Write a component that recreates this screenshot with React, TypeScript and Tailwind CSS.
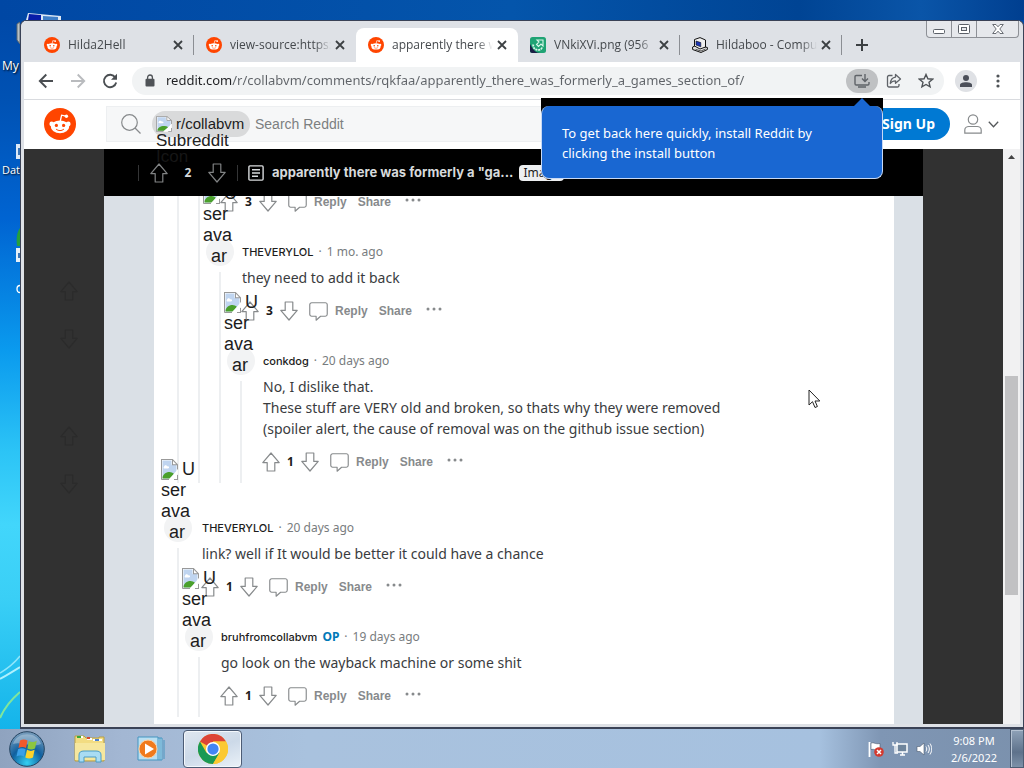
import React from "react";

type IconProps = { className?: string };

const Snoo = ({ className }: IconProps) => (
  <svg viewBox="0 0 32 32" className={className} aria-hidden="true">
    <circle cx="16" cy="16" r="16" fill="#ff4500" />
    <path d="M16.3 13 17.6 7.2 22 8.2" fill="none" stroke="#fff" strokeWidth="1.3" />
    <circle cx="22.4" cy="8.2" r="1.7" fill="#fff" />
    <circle cx="7.7" cy="15.9" r="2.3" fill="#fff" />
    <circle cx="24.3" cy="15.9" r="2.3" fill="#fff" />
    <ellipse cx="16" cy="18.8" rx="9.2" ry="6.4" fill="#fff" />
    <circle cx="12.4" cy="17.4" r="1.6" fill="#ff4500" />
    <circle cx="19.6" cy="17.4" r="1.6" fill="#ff4500" />
    <path d="M12.4 21.4c2 1.7 5.2 1.7 7.2 0" fill="none" stroke="#ff4500" strokeWidth="1" strokeLinecap="round" />
  </svg>
);

const ImageFavicon = ({ className }: IconProps) => (
  <svg viewBox="0 0 16 16" className={className} aria-hidden="true">
    <rect width="16" height="16" rx="2.5" fill="#1fa374" />
    <path d="M0 7v6.500A2.500 2.500 0 0 0 2.500 16H10c-4 0-7-3-10-9z" fill="#1b1f45" />
    <path d="M7 3h6v6l-2-2-2.500 2.500L6.500 7.500 9 5z" fill="#1fa374" stroke="#d9f7ea" strokeWidth="1.100" />
    <path d="M3.300 7.500C2.800 10.500 5 13 8 13c2.300 0 3.800-1.200 4.200-2.800" fill="none" stroke="#d9f7ea" strokeWidth="1.800" strokeDasharray="2 .8" />
  </svg>
);

const ComputerFavicon = ({ className }: IconProps) => (
  <svg viewBox="0 0 16 16" className={className} aria-hidden="true">
    <path d="M.6 10 5 8l10.400 2.500v2L9 15.500l-8.400-3z" fill="#e2e2e2" stroke="#111" />
    <path d="M2.500 2.500 8 .6l5.500 2.400v7L8 12 2.500 9z" fill="#efefef" stroke="#111" />
    <path d="M4 4l4.800 1.600v4.200L4 8z" fill="#1c35b5" stroke="#111" strokeWidth=".6" />
    <path d="M3.500 12.300 9 14l4.500-2" fill="none" stroke="#555" />
  </svg>
);

const BrokenImage = ({ className }: IconProps) => (
  <svg viewBox="0 0 17 20" className={className} preserveAspectRatio="none" aria-hidden="true">
    <path d="M.5.5h11l5 5v14H.5z" fill="#fff" />
    <path d="M1.500 1.500h9v4h5v8L8 18.500H1.500z" fill="#c0d5f0" />
    <path d="M3 7.500c0-2 3-2 3-.5 2-.5 3 1.500 1 2H4C2.600 9 2 8 3 7.500z" fill="#fff" />
    <path d="M1.500 18.500c0-4 4-6.500 8-6 2 .2 3 1 3.500 1.800L8.500 18.500z" fill="#4aa02c" />
    <path d="M.5 19.500V.5h11l5 5v4.500M11.500.5v5h5M.5 19.500H8M16.500 15v4.500H13" fill="none" stroke="#999" />
    <path d="M16.500 10 8 19.500h4l4.500-5z" fill="#fff" />
  </svg>
);

const Vote = ({ down = false, className }: IconProps & { down?: boolean }) => (
  <svg viewBox="0 0 18 20" className={className} aria-hidden="true" fill="none" stroke="currentColor" strokeWidth="1.200" strokeLinejoin="round">
    {down ? (
      <path d="M5.200 1h7.600v8.400h4.400L9 19 .8 9.400h4.400z" />
    ) : (
      <path d="M5.200 19h7.600v-8.400h4.400L9 1 .8 10.600h4.400z" />
    )}
  </svg>
);

const Bubble = ({ className }: IconProps) => (
  <svg viewBox="0 0 20 20" className={className} aria-hidden="true" fill="none" stroke="currentColor" strokeWidth="1.200" strokeLinejoin="round">
    <path d="M2.800.8h14.400a2 2 0 0 1 2 2V13a2 2 0 0 1-2 2h-5L7.500 19.200V15H2.800a2 2 0 0 1-2-2V2.800a2 2 0 0 1 2-2z" />
  </svg>
);

const Close = () => (
  <svg viewBox="0 0 10 10" className="size-[10px]" aria-hidden="true">
    <path d="M1 1l8 8M9 1 1 9" stroke="#3c4043" strokeWidth="1.800" />
  </svg>
);

const tabs = [
  { title: "Hilda2Hell", icon: <Snoo className="size-4" />, rule: true },
  { title: "view-source:https:", icon: <Snoo className="size-4" /> },
  { title: "apparently there w", icon: <Snoo className="size-4" />, active: true },
  { title: "VNkiXVi.png (956", icon: <ImageFavicon className="size-4" />, rule: true },
  { title: "Hildaboo - Compu", icon: <ComputerFavicon className="size-4" />, rule: true },
];

function TabStrip() {
  return (
    <div className="flex h-[41px] items-end bg-[#dee1e6] pl-2">
      {tabs.map((t) => (
        <div
          key={t.title}
          className={
            "flex h-[34px] w-[162px] shrink-0 items-center pl-3 " +
            (t.active ? "rounded-t-lg bg-white" : "")
          }
        >
          {t.icon}
          <button className="ml-2 w-[101px] overflow-hidden text-left font-[Open_Sans,sans-serif] text-xs whitespace-nowrap text-[#45494d] [mask-image:linear-gradient(90deg,#000_84%,transparent_100%)]">
            {t.title}
          </button>
          <button aria-label={"Close " + t.title} className="ml-px flex size-4 items-center justify-center">
            <Close />
          </button>
          {t.rule && <span className="ml-auto h-5 w-px bg-[#8b8e93]" />}
        </div>
      ))}
      <button aria-label="New tab" className="ml-[14px] flex h-[34px] items-center">
        <svg viewBox="0 0 12 12" className="size-3" aria-hidden="true">
          <path d="M6 0v12M0 6h12" stroke="#3c4043" strokeWidth="2" />
        </svg>
      </button>
      <div className="ml-auto mr-px flex h-[17px] self-start rounded-b border border-t-0 border-[#8d9096] bg-[#e6e8ec]">
        <button aria-label="Minimize" className="flex w-[25px] items-center justify-center border-r border-[#8d9096] pt-1">
          <svg viewBox="0 0 12 5" className="h-[5px] w-3" aria-hidden="true"><rect x=".5" y=".5" width="11" height="4" rx="1" fill="#fff" stroke="#5b6068" /></svg>
        </button>
        <button aria-label="Maximize" className="flex w-[25px] items-center justify-center border-r border-[#8d9096]">
          <svg viewBox="0 0 12 10" className="h-[10px] w-3" aria-hidden="true"><rect x=".5" y=".5" width="11" height="9" rx="1" fill="#fff" stroke="#5b6068" /><rect x="3.500" y="3.500" width="5" height="3" fill="#e6e8ec" stroke="#5b6068" /></svg>
        </button>
        <button aria-label="Close window" className="flex w-[41px] items-center justify-center">
          <svg viewBox="0 0 12 10" className="h-[10px] w-3" aria-hidden="true"><path d="M.7.500h3.300l2 2.300 2-2.300h3.300L7.800 5l3.500 4.500H8L6 7.200 4 9.500H.7L4.200 5z" fill="#fff" stroke="#5b6068" strokeWidth=".9" /></svg>
        </button>
      </div>
    </div>
  );
}

function Toolbar() {
  return (
    <div className="flex h-[38px] items-center border-b border-[#d9dbdf] bg-white pr-5 pl-[14px]">
      <div className="flex gap-4 text-[#4a4e52]">
        <button aria-label="Back" className="size-4">
          <svg viewBox="0 0 16 16" aria-hidden="true"><path d="M15 8H2M8.300 1.500 1.800 8l6.500 6.500" fill="none" stroke="currentColor" strokeWidth="1.900" /></svg>
        </button>
        <button aria-label="Forward" className="size-4 text-[#b9bbbe]">
          <svg viewBox="0 0 16 16" aria-hidden="true"><path d="M1 8h13M7.700 1.500 14.200 8l-6.500 6.500" fill="none" stroke="currentColor" strokeWidth="1.900" /></svg>
        </button>
        <button aria-label="Reload" className="size-4">
          <svg viewBox="0 0 16 16" aria-hidden="true"><path d="M13.300 4.500A6.200 6.200 0 1 0 14.200 9.500" fill="none" stroke="currentColor" strokeWidth="1.900" /><path d="M15 .8v6H9z" fill="currentColor" /></svg>
        </button>
      </div>
      <div className="ml-[14px] flex h-7 flex-1 items-center rounded-full bg-[#f1f3f4] pr-[10px] pl-[13px]">
        <svg viewBox="0 0 10 13" className="h-[13px] w-[10px]" aria-hidden="true"><rect x=".5" y="4.800" width="9" height="7.700" rx="1" fill="#4f5357" /><path d="M2.600 5V3.400a2.400 2.400 0 0 1 4.800 0V5" fill="none" stroke="#4f5357" strokeWidth="1.300" /></svg>
        <label htmlFor="url" className="sr-only">Address</label>
        <input
          id="url"
          className="ml-[11px] min-w-0 flex-1 bg-[linear-gradient(90deg,#202124_66px,#5f6368_66px)] bg-clip-text font-['Noto_Sans',sans-serif] text-[13px] text-transparent outline-none"
          defaultValue="reddit.com/r/collabvm/comments/rqkfaa/apparently_there_was_formerly_a_games_section_of/"
        />
        <button aria-label="Install Reddit" className="flex h-6 w-8 items-center justify-center rounded-full bg-[#bfc1c3]">
          <svg viewBox="0 0 16 14" className="h-[14px] w-4" aria-hidden="true" fill="none" stroke="#5f6368" strokeWidth="1.400"><path d="M8 1.500H2.200A1.200 1.200 0 0 0 1 2.700v7.100A1.200 1.200 0 0 0 2.200 11h11.600A1.200 1.200 0 0 0 15 9.800V8M4 13h8M11 0v7M8 4.500l3 3 3-3" /></svg>
        </button>
        <button aria-label="Share page" className="ml-2 size-4">
          <svg viewBox="0 0 16 16" aria-hidden="true" fill="none" stroke="#5f6368" strokeWidth="1.300" strokeLinejoin="round"><path d="M6.500 2.500H3A1.500 1.500 0 0 0 1.500 4v8.500A1.500 1.500 0 0 0 3 14h8.500a1.500 1.500 0 0 0 1.500-1.500V11" /><path d="M9.500 1.500 14.500 6l-5 4.300V7.800C7 7.800 5.500 8.700 4.300 10.500 4.600 7 6.500 4.500 9.500 4.100z" /></svg>
        </button>
        <button aria-label="Bookmark" className="ml-4 size-4">
          <svg viewBox="0 0 16 16" aria-hidden="true"><path d="M8 1.500l1.900 4.300 4.700.4L11 9.300l1.100 4.600L8 11.500l-4.100 2.400L5 9.300 1.400 6.200l4.700-.4z" fill="none" stroke="#4f5357" strokeWidth="1.400" /></svg>
        </button>
      </div>
      <button aria-label="Profile" className="ml-[11px] flex size-[22px] items-center justify-center rounded-full bg-[#dfe1e5]">
        <svg viewBox="0 0 12 12" className="size-3" aria-hidden="true" fill="#4b4f59"><circle cx="6" cy="3" r="3" /><path d="M0 12V9.800C0 8 3 7.200 6 7.200s6 .8 6 2.600V12z" /></svg>
      </button>
      <button aria-label="Menu" className="ml-[19px] h-[14px] w-1">
        <svg viewBox="0 0 4 14" aria-hidden="true" fill="#4f5357"><circle cx="2" cy="2" r="1.600" /><circle cx="2" cy="7" r="1.600" /><circle cx="2" cy="12" r="1.600" /></svg>
      </button>
    </div>
  );
}

function SiteHeader() {
  return (
    <header className="flex h-[49px] items-center bg-white pr-[21px] pb-px pl-5">
      <a href="#home" aria-label="Reddit home"><Snoo className="size-8" /></a>
      <div className="ml-[30px] flex h-9 flex-1 items-center border border-[#edeff1] bg-[#f6f7f8] pl-[14px]">
        <svg viewBox="0 0 20 20" className="size-5" aria-hidden="true" fill="none" stroke="#878a8c" strokeWidth="1.200"><circle cx="8.500" cy="8.500" r="7.800" /><path d="M14 14l5.500 5.500" /></svg>
        <div className="relative ml-[11px] flex h-[26px] w-[98px] items-center rounded-full bg-[#d9dadb] pl-1">
          <BrokenImage className="h-4 w-4" />
          <span className="ml-1 text-[15px] leading-4 text-[#1c1c1c]">r/collabvm</span>
          <span className="absolute top-[22px] left-1 z-10 text-[17px] leading-4 text-[#222]">
            Subreddit
            <span className="block text-[#161616]">Icon</span>
          </span>
        </div>
        <label htmlFor="search" className="sr-only">Search</label>
        <input id="search" placeholder="Search Reddit" className="ml-[5px] min-w-0 flex-1 bg-transparent text-sm outline-none placeholder:text-[#7c7f81]" />
      </div>
      <button className="ml-4 h-8 w-[120px] rounded-full bg-[#0079d3] pr-[15px] text-right font-['Noto_Sans',sans-serif] text-sm font-bold text-white">Sign Up</button>
      <button aria-label="Account" className="ml-[14px] flex items-center gap-[6px]">
        <svg viewBox="0 0 18 20" className="h-5 w-[18px]" aria-hidden="true" fill="none" stroke="#878a8c" strokeWidth="1.200"><circle cx="9" cy="5.500" r="4.700" /><path d="M.8 19.200V16c0-2 2-3.500 4-3.500h8.400c2 0 4 1.500 4 3.500v3.200z" /></svg>
        <svg viewBox="0 0 11 7" className="h-[7px] w-[11px]" aria-hidden="true" fill="none" stroke="#55585a" strokeWidth="1.300"><path d="M.8.800 5.500 5.800 10.200.800" /></svg>
      </button>
    </header>
  );
}

function PostBar() {
  return (
    <div className="flex h-[47px] items-center bg-black pl-[34px] text-[#d7dadc]">
      <span className="h-4 w-px bg-[#343536]" />
      <button aria-label="Upvote post" className="ml-[11px] text-[#818384]"><Vote className="h-5 w-[18px]" /></button>
      <span className="w-10 text-center font-['Noto_Sans',sans-serif] text-xs font-bold">2</span>
      <button aria-label="Downvote post" className="text-[#818384]"><Vote down className="h-5 w-[18px]" /></button>
      <span className="ml-[11px] h-4 w-px bg-[#343536]" />
      <svg viewBox="0 0 16 16" className="ml-[10px] size-4" aria-hidden="true" fill="none" stroke="#d7dadc" strokeWidth="1.400"><rect x=".9" y=".9" width="14.200" height="14.200" rx="1" /><path d="M4 4.800h8M4 8h8M4 11.200h6" /></svg>
      <h1 className="ml-2 font-[Inter,sans-serif] text-[13px] font-bold whitespace-nowrap">apparently there was formerly a "ga...</h1>
      <span className="ml-[6px] rounded-sm bg-[#edeff1] px-1 font-['Noto_Sans',sans-serif] text-xs leading-4 text-[#1c1c1c]">Image</span>
    </div>
  );
}

function Actions({ score }: { score: number }) {
  return (
    <div className="flex h-8 items-center text-xs font-bold text-[#878a8c]">
      <button aria-label="Upvote"><Vote className="h-5 w-[18px]" /></button>
      <span className="w-[21px] text-center font-['Noto_Sans',sans-serif] text-[#1c1c1c]">{score}</span>
      <button aria-label="Downvote"><Vote down className="h-5 w-[18px]" /></button>
      <button className="ml-[11px] flex items-center gap-[7px]"><Bubble className="size-[19px]" />Reply</button>
      <button className="ml-[11px]">Share</button>
      <button aria-label="More" className="ml-[14px] pb-1">
        <svg viewBox="0 0 16 4" className="h-1 w-4" aria-hidden="true" fill="currentColor"><circle cx="2" cy="2" r="1.500" /><circle cx="8" cy="2" r="1.500" /><circle cx="14" cy="2" r="1.500" /></svg>
      </button>
    </div>
  );
}

const Rail = () => (
  <div className="flex w-[21px] shrink-0 pl-[13px]"><span className="w-[2px] bg-[#edeff1]" /></div>
);

function Avatar() {
  return (
    <div className="relative size-7 shrink-0 rounded-full bg-[#f2f3f4]">
      <div role="img" aria-label="User avatar" className="absolute -bottom-px -left-[3px] w-9 text-lg leading-[21px] text-[#1c1c1c]">
        <span className="flex items-start gap-1"><BrokenImage className="h-[21px] w-[17px]" />U</span>
        <span className="block">ser</span>
        <span className="block">ava</span>
        <span className="block pl-2">ar</span>
      </div>
    </div>
  );
}

type CommentData = {
  depth: number;
  author?: string;
  op?: boolean;
  age?: string;
  lines?: string[];
  score: number;
  last?: boolean;
};

const comments: CommentData[] = [
  { depth: 1, score: 3 },
  { depth: 2, author: "THEVERYLOL", age: "1 mo. ago", lines: ["they need to add it back"], score: 3 },
  {
    depth: 3,
    author: "conkdog",
    age: "20 days ago",
    lines: [
      "No, I dislike that.",
      "These stuff are VERY old and broken, so thats why they were removed",
      "(spoiler alert, the cause of removal was on the github issue section)",
    ],
    score: 1,
    last: true,
  },
  { depth: 0, author: "THEVERYLOL", age: "20 days ago", lines: ["link? well if It would be better it could have a chance"], score: 1 },
  { depth: 1, author: "bruhfromcollabvm", op: true, age: "19 days ago", lines: ["go look on the wayback machine or some shit"], score: 1, last: true },
];

function Comment({ c }: { c: CommentData }) {
  return (
    <article className={"flex " + (c.last ? "mb-[31px]" : "")}>
      {Array.from({ length: c.depth }, (_, i) => <Rail key={i} />)}
      <div className="flex w-7 shrink-0 flex-col">
        {c.author && <Avatar />}
        <span className={"ml-[13px] w-[2px] flex-1 bg-[#edeff1] " + (c.author ? "mt-[6px]" : "")} />
      </div>
      <div className={"relative min-w-0 " + (c.last ? "pb-[5px] " : "pb-5 ") + (c.depth === 0 ? "pl-[9px]" : "pl-[7px]")}>
        {c.author && (
          <>
            <div className="flex h-7 items-center gap-[5px] pl-px font-['Noto_Sans',sans-serif] text-xs text-[#787c7e]">
              <a href="#user" className="font-[Inter,sans-serif] text-[11px] font-medium text-[#1c1c1c]">{c.author}</a>
              {c.op && <span className="font-bold text-[#0079b8]">OP</span>}
              <span>·</span>
              <span>{c.age}</span>
            </div>
            <div className="mt-px mb-[7px] pl-px font-['Noto_Sans',sans-serif] text-sm leading-[21px] text-[#3a3c3e]">
              {c.lines?.map((l) => <p key={l}>{l}</p>)}
            </div>
          </>
        )}
        <Actions score={c.score} />
      </div>
    </article>
  );
}

function InstallTip() {
  return (
    <div role="tooltip" className="absolute top-[77px] right-[140px] w-[342px] rounded-b-lg bg-black pt-2">
      <svg viewBox="0 0 18 9" className="absolute top-0 right-3 h-[9px] w-[18px]" aria-hidden="true"><path d="M0 9 9 0l9 9z" fill="#1967d2" /></svg>
      <p className="rounded-lg border border-t-0 border-[#c7d9f5] bg-[#1967d2] px-5 pt-[17px] pb-[15px] font-['Noto_Sans',sans-serif] text-[13px] leading-5 text-white">
        To get back here quickly, install Reddit by
        <br />
        clicking the install button
      </p>
    </div>
  );
}

function DimmedVotes() {
  return (
    <div className="flex w-20 shrink-0 flex-col items-center gap-[77px] pt-[132px] pl-[10px] text-[#2b2b2b]" aria-hidden="true">
      {[0, 1].map((i) => (
        <div key={i} className="flex flex-col items-center gap-7">
          <Vote className="h-5 w-[18px]" />
          <Vote down className="h-5 w-[18px]" />
        </div>
      ))}
    </div>
  );
}

function BrowserWindow() {
  return (
    <section aria-label="Browser" className="relative flex min-h-0 flex-1 flex-col rounded-t-md border border-b-2 border-[#3a4256] bg-[#dee1e6] px-[3px] pb-[3px]">
      <TabStrip />
      <Toolbar />
      <SiteHeader />
      <div className="flex min-h-0 flex-1 bg-[#313131]">
        <DimmedVotes />
        <main className="mr-20 flex min-h-0 min-w-0 flex-1 flex-col bg-[#dae0e6]">
          <PostBar />
          <div className="mr-[29px] ml-[50px] min-h-0 flex-1 overflow-hidden bg-white pl-[10px]">
            <div className="-mt-[10px]">
              {comments.map((c, i) => <Comment key={i} c={c} />)}
            </div>
          </div>
        </main>
        <div className="flex w-[17px] flex-col items-center bg-[#f1f1f2] pt-[6px]">
          <svg viewBox="0 0 7 4" className="h-1 w-[7px]" aria-hidden="true"><path d="M0 4 3.500 0 7 4z" fill="#444" /></svg>
          <div className="mt-[217px] h-[219px] w-[13px] bg-[#c1c1c3]" />
        </div>
      </div>
      <InstallTip />
      <svg viewBox="0 0 13 20" className="absolute top-[368px] right-[202px] h-5 w-[13px]" aria-hidden="true">
        <path d="M1 1v15l3.500-3.300L7 18.500l2.400-1L7 12h4.800z" fill="#fff" stroke="#222" strokeWidth="1" strokeLinejoin="round" />
      </svg>
    </section>
  );
}

function Taskbar() {
  return (
    <footer className="flex h-[39px] shrink-0 items-center bg-[linear-gradient(90deg,#8fa3bf_0,#a3b7d3_12%,#a9c2de_30%,#a6c1df_80%,#7f96b4_86%,#7b91ad_100%)] pl-[9px]">
      <button aria-label="Start" className="size-9">
        <svg viewBox="0 0 36 36" aria-hidden="true">
          <defs>
            <radialGradient id="orb" cx=".5" cy=".9" r=".9"><stop offset="0" stopColor="#35d0f2" /><stop offset=".5" stopColor="#10609f" /><stop offset="1" stopColor="#7c9fbd" /></radialGradient>
          </defs>
          <circle cx="18" cy="18" r="17.300" fill="url(#orb)" stroke="#24435f" strokeWidth="1" />
          <path d="M4 13C8 0 28 0 32 13 24 17 12 10 4 13z" fill="#fff" opacity=".3" />
          <path d="M11 9.500c2.500-1.500 5-1.500 7.500 0L17 17c-2.500-1.500-5-1.400-7.500 0z" fill="#f0592b" />
          <path d="M19.800 10c2.500 1.400 5 1.400 8-.2L26 17.500c-2.600 1.500-5 1.400-7.600 0z" fill="#8cc63f" />
          <path d="M9 18.300c2.500-1.400 5-1.500 7.600 0L15 25.500c-2.500-1.500-5-1.500-7.500 0z" fill="#3aa0e8" />
          <path d="M18 18.800c2.600 1.400 5 1.500 7.600 0L24 26.500c-2.500 1.500-5 1.400-7.700 0z" fill="#fdd32a" />
        </svg>
      </button>
      <button aria-label="File Explorer" className="ml-7 h-7 w-[34px]">
        <svg viewBox="0 0 34 28" aria-hidden="true">
          <path d="M2 1h9l2 2h13v-1h5v24H2z" fill="#f2dc82" stroke="#b99f45" />
          <path d="M5 2h5M14 4h5M20 5h9" stroke="#fff" strokeWidth="2" />
          <path d="M4 2h4" stroke="#38a838" strokeWidth="2" /><path d="M14 3h3" stroke="#d84a2b" strokeWidth="2" /><path d="M22 5h4" stroke="#4b80cf" strokeWidth="2" />
          <path d="M2 8h30v17H2z" fill="#f6e79e" />
          <path d="M6 27v-7c0-3 2-4 5-4h12c3 0 5 1 5 4v7h-5v-5H11v5z" fill="#a9dcf4" stroke="#4a9cc7" />
        </svg>
      </button>
      <button aria-label="Media Player" className="ml-[30px] h-[26px] w-7">
        <svg viewBox="0 0 28 26" aria-hidden="true">
          <path d="M1 1h20v23H1zM21 2h4v22h-4" fill="#b9dff2" stroke="#4495c0" /><path d="M23 2v22M27 4v19" stroke="#4495c0" />
          <circle cx="11" cy="13" r="9" fill="#f07a1c" stroke="#fbd2a5" />
          <path d="M8 7.500 17 13l-9 5.500z" fill="#fff" />
        </svg>
      </button>
      <button aria-label="Chrome" className="ml-[18px] flex h-[38px] w-[59px] items-center justify-center rounded-sm border border-[#4c5c75] bg-[linear-gradient(160deg,#dfe7f0,#ccd9e8_50%,#eaf1f8)] shadow-[inset_0_0_0_1px_#f4f8fc]">
        <svg viewBox="0 0 32 32" className="size-[30px]" aria-hidden="true">
          <circle cx="16" cy="16" r="16" fill="#fbc932" />
          <path d="M16 16 2.100 8A16 16 0 0 1 29.900 8H16z" fill="#dc4437" />
          <path d="M2.100 8A16 16 0 0 0 16 32l7-12H9z" fill="#1a9955" />
          <path d="M16 8h13.900A16 16 0 0 1 16 32l7-12z" fill="#fbc932" />
          <circle cx="16" cy="16" r="7.500" fill="#fff" /><circle cx="16" cy="16" r="6" fill="#4285f4" />
        </svg>
      </button>
      <div className="ml-auto flex items-center gap-2">
        <svg viewBox="0 0 16 16" className="size-4" aria-label="Action Center"><path d="M1.500 1v15" stroke="#fff" strokeWidth="1.800" /><path d="M3 2c3-1 4 1.500 9 .5v6.500c-4 1-6-1.500-9-.5z" fill="#fff" stroke="#4b5a6e" strokeWidth=".6" /><circle cx="11" cy="11" r="4.800" fill="#d43a2f" /><path d="M9 9l4 4M13 9l-4 4" stroke="#fff" strokeWidth="1.500" /></svg>
        <svg viewBox="0 0 16 16" className="size-4" aria-label="Network"><path d="M5 3h10v8H5zM8 14h5M10.500 11v3" fill="#6f859c" stroke="#fff" strokeWidth="1.500" /><path d="M1 1v3h4V1M3 4v8h3" fill="none" stroke="#fff" strokeWidth="1.300" /></svg>
        <svg viewBox="0 0 16 16" className="size-4" aria-label="Volume"><path d="M1 5.500h3L8 2v12l-4-3.500H1z" fill="#fff" stroke="#4b5a6e" strokeWidth=".6" /><path d="M10 5.500c1 1.500 1 3.500 0 5M12 4c1.800 2.500 1.800 5.500 0 8M14 2.500c2.300 3.500 2.300 7.500 0 11" fill="none" stroke="#fff" /></svg>
      </div>
      <time className="ml-[11px] w-[62px] text-center font-['Noto_Sans',sans-serif] text-[11px] leading-[17px] text-white">
        9:08 PM<br />2/6/2022
      </time>
      <button aria-label="Show desktop" className="ml-[5px] h-[39px] w-[14px] border border-[#4d5d73] bg-[linear-gradient(180deg,#8fa2b8,#5e728b_60%,#7d91a8)] shadow-[inset_1px_1px_0_#b4c2d2]" />
    </footer>
  );
}

function DesktopEdge() {
  return (
    <aside className="flex w-5 shrink-0 flex-col overflow-hidden font-[Open_Sans,sans-serif] text-xs whitespace-nowrap text-white [text-shadow:1px_1px_2px_#000]">
      <svg viewBox="0 0 20 32" className="mt-px h-8 w-5" aria-hidden="true"><path d="M17 3l3-2v22l-3-4z" fill="#b9c2c7" stroke="#5c6870" /></svg>
      <span className="mt-[5px] pl-[2px] leading-4">My</span>
      <svg viewBox="0 0 20 88" className="h-[88px] w-5" aria-hidden="true"><path d="M16 70h4v15h-4z" fill="#dce9f7" /><path d="M18 74h2v7h-2z" fill="#3b76b8" /></svg>
      <span className="pl-[2px] text-[11px] leading-4">Dat</span>
      <svg viewBox="0 0 20 130" className="h-[130px] w-5" aria-hidden="true"><path d="M20 50c-3 4-4 10-3 18h3z" fill="#25a03c" /><path d="M16 70h4v14h-4z" fill="#e6f0f8" /><path d="M18 75h2v5h-2z" fill="#3b76b8" /><path d="M20 107.500c-2.500 0-3 1.500-3 3.500s.5 3.500 3 3.500" fill="none" stroke="#fff" strokeWidth="1.300" /></svg>
      <svg viewBox="0 0 20 100" preserveAspectRatio="none" className="mt-auto h-[100px] w-5" aria-hidden="true" fill="none"><path d="M0 44Q12 37 20 27" stroke="#8fe6fb" strokeWidth="1.500" /><path d="M0 50Q12 43 20 38" stroke="#b0f0fd" strokeWidth="2" /><path d="M0 89Q6 75 20 63" stroke="#80e69c" strokeWidth="2" /></svg>
    </aside>
  );
}

export default function App() {
  return (
    <div className="flex h-screen flex-col overflow-hidden bg-[#0d4fa6] font-['Liberation_Sans',Arial,sans-serif]">
      <div className="flex min-h-0 flex-1 flex-col bg-[linear-gradient(180deg,#0047a6_0%,#0052b4_14%,#0064d2_30%,#0a9aee_48%,#2cc4f6_62%,#42d6fb_72%,#3acff6_82%,#14b4ea_100%)]">
        <div className="flex h-5 shrink-0 justify-between bg-[linear-gradient(90deg,#0047a4,#0455ab_50%,#004494_78%,#0a55a8_90%,#003f90)] pl-[26px]">
          <svg viewBox="0 0 36 8" className="mt-3 h-2 w-9" aria-hidden="true"><path d="M2 1l33 3v4H0z" fill="#dce7f4" /><path d="M3 2l12 1v5H2z" fill="#071ca8" /><path d="M17 4l15 1v3H17z" fill="#3f7fc8" /></svg>
        </div>
        <div className="flex min-h-0 flex-1">
          <DesktopEdge />
          <div className="flex min-w-0 flex-1 flex-col">
            <BrowserWindow />
          </div>
        </div>
      </div>
      <Taskbar />
    </div>
  );
}
